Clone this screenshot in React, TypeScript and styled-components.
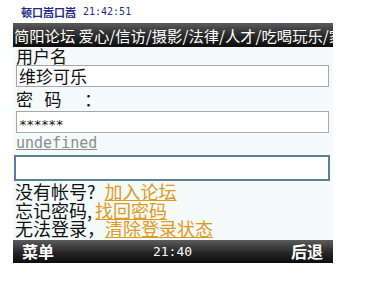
import React, { FunctionComponent } from "react";
import styled, { createGlobalStyle } from "styled-components";

const GlobalStyle = createGlobalStyle`
  html, body {
    margin: 0;
    padding: 0;
    background: #ffffff;
  }
`;

const Screen = styled.div`
  margin-left: 13px;
  width: 320px;
  display: flex;
  flex-direction: column;
  font-family: "Noto Sans CJK SC", "Noto Sans", sans-serif;
  color: #111;
`;

const StatusLine = styled.div`
  height: 23px;
  padding-left: 8px;
  display: flex;
  align-items: center;
  font-size: 11px;
  font-weight: 700;
  color: #1c2b8c;
  span {
    font-family: "DejaVu Sans Mono", monospace;
    font-size: 10px;
    font-weight: 400;
    margin-left: 7px;
  }
`;

const Bar = styled.div<{ $height: number }>`
  height: ${(p) => p.$height}px;
  background: linear-gradient(#5c5c5c, #262626 55%, #0c0c0c);
  color: #fff;
  display: flex;
  align-items: center;
  overflow: hidden;
  white-space: nowrap;
`;

const TitleText = styled.div`
  flex-shrink: 0;
  font-size: 15.3px;
  line-height: 24px;
  padding-left: 1px;
`;

const Content = styled.div`
  background: #f5fafb;
  padding: 0 3px 2px 1px;
  display: flex;
  flex-direction: column;
`;

const Label = styled.div<{ $height: number }>`
  height: ${(p) => p.$height}px;
  font-size: 17px;
  line-height: ${(p) => p.$height}px;
  padding-left: 2px;
  white-space: pre;
`;

const Field = styled.div<{ $focused?: boolean }>`
  height: ${(p) => (p.$focused ? 22 : 20)}px;
  margin-left: ${(p) => (p.$focused ? 0 : 2)}px;
  margin-right: ${(p) => (p.$focused ? 0 : 1)}px;
  border: ${(p) => (p.$focused ? "2px solid #5b7ea2" : "1px solid #a8a8a8")};
  background: #fff;
  font-size: 17px;
  line-height: 20px;
  padding-left: 2px;
`;

const Stars = styled.span`
  font-family: "DejaVu Sans Mono", monospace;
  font-size: 13px;
  letter-spacing: -0.5px;
`;

const Undefined = styled.div`
  height: 21px;
  margin-top: 1px;
  padding-left: 2px;
  font-family: "DejaVu Sans Mono", monospace;
  font-size: 15px;
  line-height: 19px;
  color: #8c8c8c;
  text-decoration: underline;
`;

const Lines = styled.div`
  margin-top: 1px;
  display: flex;
  flex-direction: column;
`;

const Line = styled.div`
  height: 18.5px;
  font-size: 18px;
  line-height: 18.5px;
  padding-left: 1px;
  white-space: pre;
`;

const Link = styled.a<{ $gap: number }>`
  margin-left: ${(p) => p.$gap}px;
  color: #e09a1c;
  text-decoration: underline;
`;

const SoftKey = styled.div`
  font-size: 16px;
  font-weight: 700;
  width: 60px;
  &:last-child {
    text-align: right;
  }
`;

const Clock = styled.div`
  flex: 1;
  text-align: center;
  font-family: "DejaVu Sans Mono", monospace;
  font-size: 13px;
`;

const BottomInner = styled.div`
  display: flex;
  align-items: center;
  width: 100%;
  padding: 0 10px 0 9px;
`;

const App: FunctionComponent = () => (
  <>
    <GlobalStyle />
    <Screen>
      <StatusLine>
        顿口嵩口嵩<span>21:42:51</span>
      </StatusLine>
      <Bar $height={24}>
        <TitleText>简阳论坛 爱心/信访/摄影/法律/人才/吃喝玩乐/家装</TitleText>
      </Bar>
      <Content>
        <Label $height={18}>用户名</Label>
        <Field>维珍可乐</Field>
        <Label $height={24}>{"密   码      ："}</Label>
        <Field>
          <Stars>******</Stars>
        </Field>
        <Undefined>undefined</Undefined>
        <Field $focused />
        <Lines>
          <Line>
            没有帐号?<Link $gap={9}>加入论坛</Link>
          </Line>
          <Line>
            忘记密码,<Link $gap={3}>找回密码</Link>
          </Line>
          <Line>
            无法登录，<Link $gap={0}>清除登录状态</Link>
          </Line>
        </Lines>
      </Content>
      <Bar $height={23}>
        <BottomInner>
          <SoftKey>菜单</SoftKey>
          <Clock>21:40</Clock>
          <SoftKey>后退</SoftKey>
        </BottomInner>
      </Bar>
    </Screen>
  </>
);

export default App;
